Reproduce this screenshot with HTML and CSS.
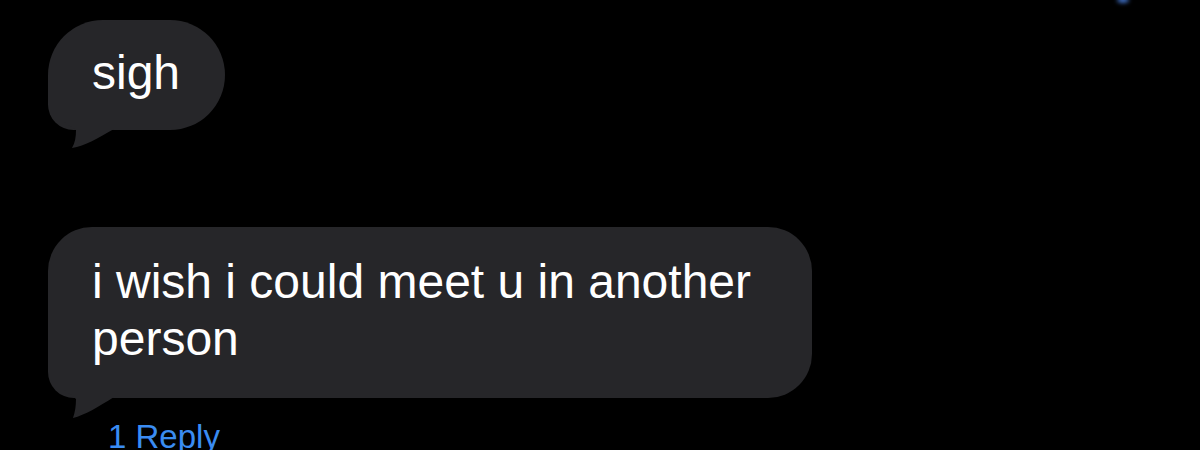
FILE: index.html
```html
<!DOCTYPE html>
<html>
<head>
<meta charset="utf-8">
<link rel="stylesheet" href="styles.css">
</head>
<body>
<div class="chat">
  <div class="msg msg-first">
    <div class="bubble">sigh
      <svg class="tail" viewBox="0 -12 70 34" width="70" height="34"><path d="M14 -10 C22 -4 26 -1 28 0 C28 7 27 13 24 18 C37 16 50 8 66 -1 L66 -10 Z" fill="#262629"/></svg>
    </div>
  </div>
  <div class="msg msg-second">
    <div class="bubble">i wish i could meet u in another person
      <svg class="tail" viewBox="0 -12 70 34" width="70" height="34"><path d="M14 -10 C22 -4 26 -1 28 1 C28 8 27 14 25 20 C37 17 50 9 66 -1 L66 -10 Z" fill="#262629"/></svg>
    </div>
    <div class="reply">1 Reply</div>
  </div>
</div>
<div class="glow"></div>
</body>
</html>
```
FILE: styles.css
```css
html, body {
  margin: 0;
  padding: 0;
  background: #000;
  width: 1200px;
  height: 450px;
  overflow: hidden;
}
body {
  position: relative;
  font-family: "Liberation Sans", Arial, sans-serif;
}
.chat {
  display: flex;
  flex-direction: column;
  align-items: flex-start;
  padding: 20px 0 0 48px;
}
.msg {
  display: flex;
  flex-direction: column;
  align-items: flex-start;
}
.msg-second {
  margin-top: 97px;
}
.bubble {
  position: relative;
  box-sizing: border-box;
  max-width: 764px;
  background: #262629;
  color: #fff;
  font-size: 48px;
  line-height: 57px;
  padding: 26px 45px 31px 44px;
  border-radius: 44px 44px 44px 26px;
}
.msg-first .bubble {
  padding: 24px 45px 29px 44px;
  border-radius: 56px 56px 56px 26px;
}
.tail {
  position: absolute;
  left: 0;
  top: calc(100% - 12px);
  display: block;
}
.reply {
  margin: 20px 0 0 60px;
  font-size: 33px;
  line-height: 38px;
  color: #3a8cf2;
}
.glow {
  position: absolute;
  left: 1117px;
  top: -3px;
  width: 12px;
  height: 6px;
  border-radius: 50%;
  background: #3f6fc4;
  filter: blur(2px);
}
```
